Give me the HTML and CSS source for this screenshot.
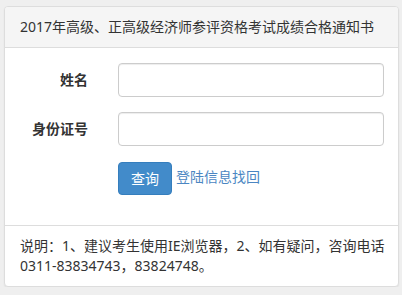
FILE: index.html
```html
<!DOCTYPE html>
<html lang="zh-CN">
<head>
<meta charset="utf-8">
<title>成绩合格通知书</title>
<link rel="stylesheet" href="styles.css">
</head>
<body>
<div class="panel">
  <div class="panel-heading">2017年高级、正高级经济师参评资格考试成绩合格通知书</div>
  <div class="panel-body">
    <form class="form">
      <div class="row">
        <label class="label" for="name">姓名</label>
        <input class="input" id="name" type="text">
      </div>
      <div class="row">
        <label class="label" for="idno">身份证号</label>
        <input class="input" id="idno" type="text">
      </div>
      <div class="row">
        <span class="label"></span>
        <div class="actions">
          <button class="btn" type="button">查询</button>
          <a class="link" href="#">登陆信息找回</a>
        </div>
      </div>
    </form>
  </div>
  <div class="panel-footer">说明：1、建议考生使用IE浏览器，2、如有疑问，咨询电话0311-83834743，83824748。</div>
</div>
</body>
</html>
```
FILE: styles.css
```css
html, body {
  margin: 0;
  padding: 0;
}
body {
  background: #efefef;
  font-family: "Noto Sans", "Noto Sans CJK SC", sans-serif;
  font-size: 14px;
  line-height: 20px;
  color: #333;
  padding: 6px 3px 0 4px;
}
.panel {
  background: #fff;
  border: 1px solid #ddd;
  border-radius: 4px;
  box-shadow: 0 1px 2px rgba(0,0,0,0.06);
  overflow: hidden;
}
.panel-heading {
  background: #f5f5f5;
  border-bottom: 1px solid #ddd;
  padding: 10px 15px;
  color: #333;
}
.panel-body {
  padding: 15px 14px 15px 15px;
}
.form {
  display: flex;
  flex-direction: column;
  gap: 15px;
  margin-bottom: 15px;
}
.row {
  display: grid;
  grid-template-columns: 68px 1fr;
  column-gap: 30px;
  align-items: center;
}
.label {
  text-align: right;
  font-weight: bold;
  color: #333;
}
.input {
  box-sizing: border-box;
  height: 34px;
  width: 100%;
  border: 1px solid #ccc;
  border-radius: 4px;
  box-shadow: inset 0 1px 1px rgba(0,0,0,0.075);
  padding: 6px 12px;
  font: inherit;
  margin: 0;
}
.actions {
  display: flex;
  align-items: center;
  gap: 4px;
}
.btn {
  box-sizing: border-box;
  height: 33px;
  padding: 6px 12px;
  background: #428bca;
  border: 1px solid #357ebd;
  border-radius: 4px;
  color: #fff;
  font: inherit;
  line-height: 20px;
  margin: 0;
  margin-top: 1px;
}
.link {
  color: #4b86c2;
  text-decoration: none;
  margin-top: -2px;
}
.panel-footer {
  border-top: 1px solid #ddd;
  padding: 10px 4px 10px 15px;
  color: #333;
}
```
